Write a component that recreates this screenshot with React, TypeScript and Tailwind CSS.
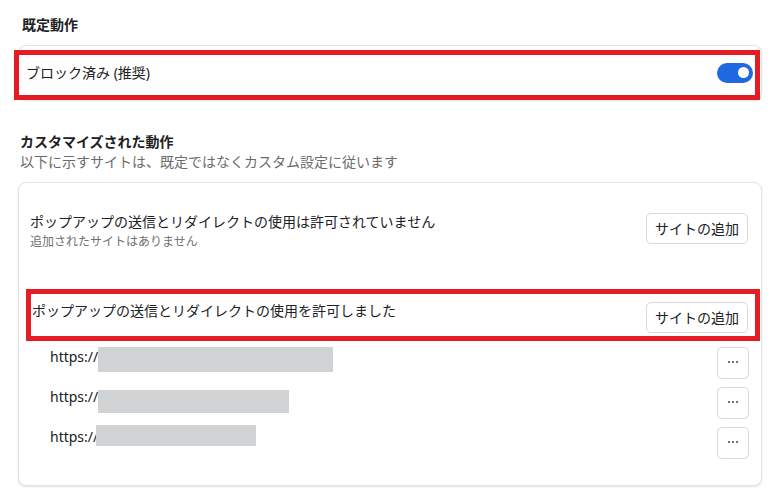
import React from 'react';

const fontStack = { fontFamily: '"Noto Sans", "Noto Sans CJK JP", sans-serif' };

const sites = [
  { id: 1, maskWidth: 'w-[235px] h-[25px] mt-0' },
  { id: 2, maskWidth: 'w-[191px] h-[23px] mt-[3px]' },
  { id: 3, maskWidth: 'w-[160px] h-[21px] -mt-[2px] -ml-[2px]' },
];

const AddSiteButton: React.FC = () => (
  <button className="h-[31px] w-[102px] shrink-0 rounded-[5px] border border-[#d9d9d9] bg-white text-[14px] text-[#202124]">
    サイトの追加
  </button>
);

const MoreButton: React.FC = () => (
  <button className="flex h-8 w-8 shrink-0 items-center justify-center gap-[2px] rounded-[5px] border border-[#d9d9d9] bg-white pb-[2px]">
    <span className="h-[2px] w-[2px] rounded-full bg-[#444]" />
    <span className="h-[2px] w-[2px] rounded-full bg-[#444]" />
    <span className="h-[2px] w-[2px] rounded-full bg-[#444]" />
  </button>
);

export default function App() {
  return (
    <div style={fontStack} className="h-[499px] w-[779px] overflow-hidden bg-white pl-[18px] pr-[17px] pt-[15px] text-[#202124]">
      {/* Default behaviour */}
      <h2 className="ml-[4px] text-[14px] font-bold leading-5">既定動作</h2>
      <div className="relative mt-[10px] flex h-[55px] items-center justify-between rounded-lg border border-[#e3e3e3] bg-white pl-[7px] pr-[8px] shadow-[0_1px_2px_rgba(0,0,0,0.12)]">
        <span className="text-[14px] leading-5">ブロック済み (推奨)</span>
        <div className="flex h-5 w-9 items-center justify-end rounded-full bg-[#1f6ae3] pr-[4px]">
          <div className="h-[11px] w-[11px] rounded-full bg-white" />
        </div>
        <div className="pointer-events-none absolute -left-[5px] top-[4px] right-[1px] -bottom-[1px] border-[5px] border-[#e41d25]" />
      </div>

      {/* Customised behaviour */}
      <h2 className="ml-[2px] mt-[33px] text-[14px] font-bold leading-[18px]">カスタマイズされた動作</h2>
      <p className="ml-[2px] mt-[2px] text-[14px] leading-[18px] text-[#6b6b6b]">以下に示すサイトは、既定ではなくカスタム設定に従います</p>

      <div className="mt-[11px] rounded-lg border border-[#e3e3e3] bg-white pb-[26px] pt-[29px] shadow-[0_1px_2px_rgba(0,0,0,0.12)]">
        <div className="flex items-start justify-between pl-[11px] pr-[13px]">
          <div>
            <div className="text-[14px] leading-5">ポップアップの送信とリダイレクトの使用は許可されていません</div>
            <div className="mt-[2px] text-[12px] leading-4 text-[#6f6f6f]">追加されたサイトはありません</div>
          </div>
          <div className="mt-[1px]">
            <AddSiteButton />
          </div>
        </div>

        <div className="relative mt-[51px] flex items-start justify-between pl-[13px] pr-[13px]">
          <div className="text-[14px] leading-5">ポップアップの送信とリダイレクトの使用を許可しました</div>
          <div className="mt-[1px]">
            <AddSiteButton />
          </div>
          <div className="pointer-events-none absolute left-[7px] -top-[12px] right-[1px] -bottom-[8px] border-[5px] border-[#e41d25]" />
        </div>

        <div className="mt-[14px] flex flex-col gap-2 pl-[31px] pr-[12px]">
          {sites.map((site) => (
            <div key={site.id} className="flex h-8 items-start justify-between">
              <div className="flex items-start">
                <span className="text-[14px] leading-5">https://</span>
                <div className={`bg-[#d1d2d4] ${site.maskWidth}`} />
              </div>
              <MoreButton />
            </div>
          ))}
        </div>
      </div>
    </div>
  );
}
